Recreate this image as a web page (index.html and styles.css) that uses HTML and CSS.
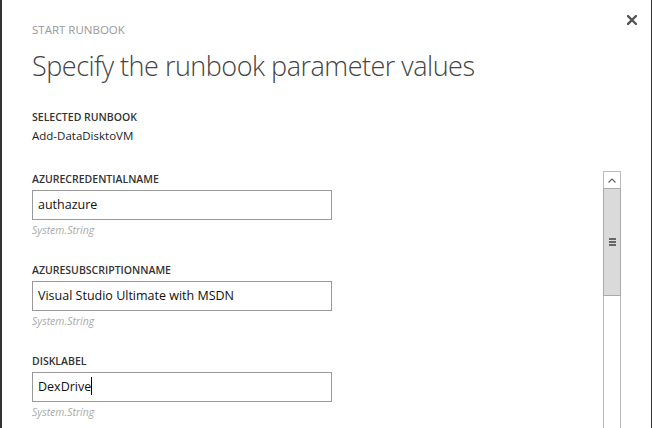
FILE: index.html
```html
<!DOCTYPE html>
<html lang="en">
<head>
  <meta charset="UTF-8" />
  <title>Start Runbook</title>
  <link rel="stylesheet" href="styles.css">
</head>
<body>

  <div class="dialog">
    <div class="close" title="Close">
      <svg width="10" height="10" viewBox="0 0 10 10">
        <path d="M1 1 L9 9 M9 1 L1 9" stroke="#555" stroke-width="2.4" stroke-linecap="square" />
      </svg>
    </div>

    <div class="header">
      <div class="step">START RUNBOOK</div>
      <h1>Specify the runbook parameter values</h1>
    </div>

    <div class="selected">
      <div class="label">SELECTED RUNBOOK</div>
      <div class="value">Add-DataDisktoVM</div>
    </div>

    <div class="params">
      <div class="param-list">
        <div class="param">
          <div class="label">AZURECREDENTIALNAME</div>
          <div class="textbox">authazure</div>
          <div class="type">System.String</div>
        </div>
        <div class="param">
          <div class="label">AZURESUBSCRIPTIONNAME</div>
          <div class="textbox">Visual Studio Ultimate with MSDN</div>
          <div class="type">System.String</div>
        </div>
        <div class="param">
          <div class="label">DISKLABEL</div>
          <div class="textbox">DexDrive<span class="caret"></span></div>
          <div class="type">System.String</div>
        </div>
      </div>

      <div class="scrollbar">
        <div class="scroll-up">
          <svg width="8" height="5" viewBox="0 0 8 5">
            <path d="M0.5 4.5 L4 1 L7.5 4.5" fill="none" stroke="#666" stroke-width="1.2" />
          </svg>
        </div>
        <div class="thumb">
          <span></span><span></span><span></span>
        </div>
        <div class="track"></div>
      </div>
    </div>
  </div>

</body>
</html>
```

FILE: styles.css
```css
html, body {
  margin: 0;
  height: 100%;
  background: #fff;
}
body {
  font-family: 'Open Sans', 'Noto Sans', sans-serif;
  color: #222;
  overflow: hidden;
}
.dialog {
  position: relative;
  height: 428px;
  box-sizing: border-box;
  border-left: 2px solid #333;
  border-right: 1px solid #333;
  padding-left: 30px;
  display: flex;
  flex-direction: column;
}
.close {
  position: absolute;
  top: 15px;
  right: 14px;
  width: 10px;
  height: 10px;
  line-height: 0;
  cursor: pointer;
}
.header {
  padding-top: 22px;
}
.step {
  font-size: 11.5px;
  line-height: 16px;
  color: #999;
}
h1 {
  margin: 10px 0 0;
  font-size: 27px;
  line-height: 36px;
  font-weight: 300;
  letter-spacing: -0.5px;
  color: #444;
}
.label {
  font-size: 10.5px;
  line-height: 14px;
  font-weight: 600;
  color: #333;
}
.selected {
  margin-top: 26px;
}
.selected .value {
  margin-top: 4px;
  font-size: 11.5px;
  line-height: 16px;
}
.params {
  margin-top: 19px;
  flex: 1;
  display: flex;
  min-height: 0;
}
.param-list {
  flex: 1;
  padding-top: 9px;
}
.param {
  margin-bottom: 26px;
}
.textbox {
  margin-top: 4px;
  width: 300px;
  height: 30px;
  box-sizing: border-box;
  border: 1px solid #999;
  padding: 0 5px;
  font-size: 12.5px;
  line-height: 28px;
  color: #111;
}
.caret {
  display: inline-block;
  width: 1px;
  height: 18px;
  background: #000;
  vertical-align: -4px;
}
.type {
  margin-top: 3px;
  font-size: 10.5px;
  line-height: 14px;
  font-style: italic;
  color: #aaa;
}
.scrollbar {
  width: 18px;
  margin-top: 8px;
  margin-right: 30px;
  display: flex;
  flex-direction: column;
}
.scroll-up {
  height: 17px;
  box-sizing: border-box;
  border: 1px solid #bbb;
  border-bottom: none;
  display: flex;
  align-items: center;
  justify-content: center;
}
.thumb {
  height: 108px;
  box-sizing: border-box;
  border: 1px solid #aaa;
  background: #dadada;
  display: flex;
  flex-direction: column;
  align-items: center;
  justify-content: center;
  gap: 1px;
}
.thumb span {
  display: block;
  width: 7px;
  height: 2px;
  background: #666;
}
.track {
  flex: 1;
  border-left: 1px solid #bbb;
  border-right: 1px solid #bbb;
}
```
